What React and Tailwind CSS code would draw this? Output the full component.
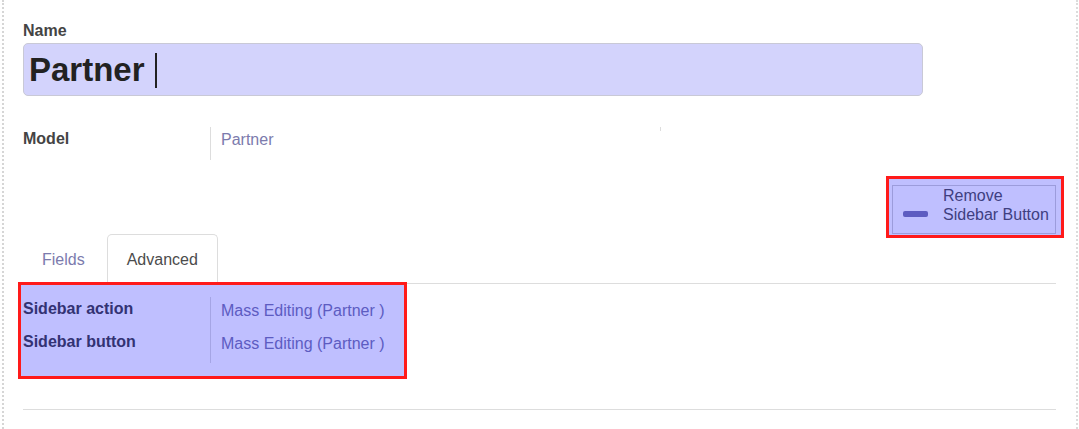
export default function App() {
  return (
    <div className="w-[1079px] h-[429px] bg-white overflow-hidden font-['Liberation_Sans',Arial,sans-serif] text-[16px] leading-[24px]">
      <div className="ml-[2px] mr-[1px] h-full border-l-2 border-dotted border-l-[#d6d6d6] border-r-2 border-r-[#dcdcdc] pl-[19px] pr-[20px] pt-[19px]">
        {/* Name */}
        <div className="font-bold text-[#444]">Name</div>
        <div className="w-[900px] h-[53px] rounded-[5px] border border-[#c9c9d6] bg-[#d3d3fc] flex items-center pl-[5px]">
          <span className="text-[33px] leading-[40px] font-bold text-[#222] mt-[1px]">Partner</span>
          <span className="ml-[10px] w-[2px] h-[35px] bg-[#222] mt-[2px]"></span>
        </div>

        {/* Model row */}
        <div className="mt-[31px] flex h-[33px]">
          <div className="w-[187px] font-bold text-[#444]">Model</div>
          <div className="w-[450px] border-l border-[#dddddd] pl-[10px] pt-[1px] text-[#7C7BAD]">Partner</div>
          <div className="w-px h-[4px] bg-[#dddddd]"></div>
        </div>

        {/* Button row */}
        <div className="mt-[25px] flex justify-end">
          <div className="relative">
            <button className="relative flex items-start w-[164px] h-[49px] border border-[#d1d1d1] bg-white text-left text-[#555] leading-[19px]">
              <span className="mt-[25px] ml-[10px] w-[25px] h-[6px] rounded-[2px] bg-[#7C7BAD]"></span>
              <span className="ml-[15px]">
                Remove
                <br />
                Sidebar Button
              </span>
            </button>
            <div className="absolute -left-[6px] -top-[9px] -right-[8px] -bottom-[4px] border-[3px] border-[#ff1a1a] bg-[#0000ff]/25 pointer-events-none"></div>
          </div>
        </div>

        {/* Tabs */}
        <div className="flex border-b border-[#dddddd]">
          <div className="px-[18px] pt-[13px] pb-[10px] border border-transparent text-[#7C7BAD]">Fields</div>
          <div className="ml-[3px] -mb-px px-[19px] pt-[13px] pb-[10px] border border-[#dddddd] border-b-white rounded-t-[5px] bg-white text-[#4c4c4c]">
            Advanced
          </div>
        </div>

        {/* Advanced group */}
        <div className="relative mt-[13px] w-[381px]">
          <div className="flex h-[33px]">
            <div className="w-[187px] font-bold text-[#444]">Sidebar action</div>
            <div className="flex-1 border-l border-[#dddddd] pl-[10px] pt-[2px] text-[#7C7BAD]">Mass Editing (Partner )</div>
          </div>
          <div className="flex h-[33px]">
            <div className="w-[187px] font-bold text-[#444]">Sidebar button</div>
            <div className="flex-1 border-l border-[#dddddd] pl-[10px] pt-[2px] text-[#7C7BAD]">Mass Editing (Partner )</div>
          </div>
          <div className="absolute -left-[5px] -top-[15px] -right-[3px] -bottom-[16px] border-[3px] border-[#ff1a1a] bg-[#0000ff]/25 pointer-events-none"></div>
        </div>

        <div className="mt-[46px] border-t border-[#dddddd]"></div>
      </div>
    </div>
  );
}
